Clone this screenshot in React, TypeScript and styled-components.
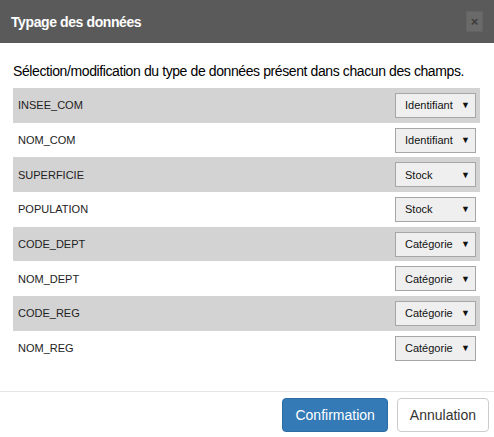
import React from "react";
import styled, { createGlobalStyle } from "styled-components";

const GlobalStyle = createGlobalStyle`
  html, body {
    margin: 0;
    padding: 0;
    background: #ffffff;
  }
  body {
    font-family: "Liberation Sans", Arial, sans-serif;
    color: #333333;
    overflow: hidden;
  }
`;

const Dialog = styled.div`
  width: 494px;
  height: 437px;
  display: flex;
  flex-direction: column;
  background: #fff;
`;

const Header = styled.div`
  height: 43px;
  background: #5a5a5a;
  display: flex;
  align-items: center;
  justify-content: space-between;
  padding: 0 11px 0 11px;
  box-sizing: border-box;
`;

const Title = styled.h4`
  margin: 0;
  font-size: 14px;
  letter-spacing: -0.4px;
  font-weight: bold;
  color: #ffffff;
`;

const CloseButton = styled.button`
  width: 17px;
  height: 21px;
  margin-top: -1px;
  padding: 0;
  border: 1px solid #636363;
  background: #6a6a6a;
  color: #3c3c3c;
  font-family: "Liberation Sans", Arial, sans-serif;
  font-size: 13px;
  font-weight: bold;
  line-height: 17px;
  cursor: pointer;
`;

const Body = styled.div`
  flex: 1;
  padding: 18px 14px 0 13px;
`;

const Intro = styled.p`
  margin: 0 0 7px;
  font-size: 14px;
  letter-spacing: -0.4px;
  line-height: 20px;
  color: #000;
`;

const FieldList = styled.div`
  display: flex;
  flex-direction: column;
`;

const FieldRow = styled.div<{ $shaded: boolean }>`
  height: 34.7px;
  display: flex;
  align-items: center;
  justify-content: space-between;
  padding: 0 4px 0 5px;
  background: ${(p) => (p.$shaded ? "#d3d3d3" : "#ffffff")};
`;

const FieldName = styled.span`
  font-size: 11px;
  color: #222;
`;

const TypeSelect = styled.div`
  width: 81px;
  height: 25px;
  box-sizing: border-box;
  display: flex;
  align-items: center;
  justify-content: space-between;
  padding: 0 5px 0 9px;
  border: 1px solid #a6a6a6;
  background: #efefef;
  font-size: 11px;
  color: #111;
  cursor: default;
`;

const Caret = styled.span`
  font-size: 9px;
  color: #111;
`;

const Footer = styled.div`
  border-top: 1px solid #e5e5e5;
  display: flex;
  justify-content: flex-end;
  gap: 9px;
  padding: 6px 5px 5px 0;
`;

const Button = styled.button<{ $primary?: boolean }>`
  height: 34px;
  padding: 0 12px;
  font-family: "Liberation Sans", Arial, sans-serif;
  font-size: 14px;
  border-radius: 4px;
  border: 1px solid ${(p) => (p.$primary ? "#2e6da4" : "#cccccc")};
  background: ${(p) => (p.$primary ? "#337ab7" : "#ffffff")};
  color: ${(p) => (p.$primary ? "#ffffff" : "#333333")};
  cursor: pointer;
`;

const fields: [string, string][] = [
  ["INSEE_COM", "Identifiant"],
  ["NOM_COM", "Identifiant"],
  ["SUPERFICIE", "Stock"],
  ["POPULATION", "Stock"],
  ["CODE_DEPT", "Catégorie"],
  ["NOM_DEPT", "Catégorie"],
  ["CODE_REG", "Catégorie"],
  ["NOM_REG", "Catégorie"],
];

export default function App() {
  return (
    <>
      <GlobalStyle />
      <Dialog>
        <Header>
          <Title>Typage des données</Title>
          <CloseButton>×</CloseButton>
        </Header>
        <Body>
          <Intro>
            Sélection/modification du type de données présent dans chacun des
            champs.
          </Intro>
          <FieldList>
            {fields.map(([name, type], i) => (
              <FieldRow key={name} $shaded={i % 2 === 0}>
                <FieldName>{name}</FieldName>
                <TypeSelect>
                  {type}
                  <Caret>▼</Caret>
                </TypeSelect>
              </FieldRow>
            ))}
          </FieldList>
        </Body>
        <Footer>
          <Button $primary>Confirmation</Button>
          <Button>Annulation</Button>
        </Footer>
      </Dialog>
    </>
  );
}
